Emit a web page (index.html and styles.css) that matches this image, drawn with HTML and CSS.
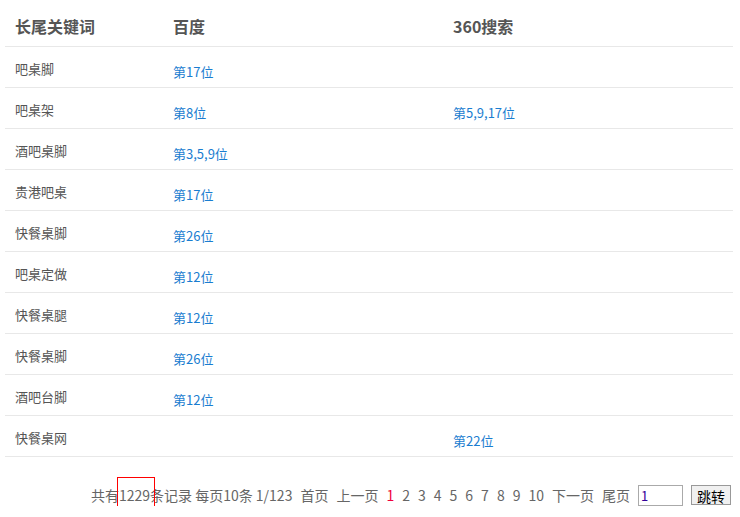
FILE: index.html
```html
<!DOCTYPE html>
<html lang="zh-CN">
<head>
<meta charset="utf-8" />
<title>长尾关键词排名</title>
<link rel="stylesheet" href="styles.css">
</head>
<body>
<div id="content">
<table class="rank">
<thead>
<tr><th class="c1">长尾关键词</th><th class="c2">百度</th><th class="c3">360搜索</th></tr>
</thead>
<tbody>
<tr><td class="kw">吧桌脚</td><td><a href="#">第17位</a></td><td></td></tr>
<tr><td class="kw">吧桌架</td><td><a href="#">第8位</a></td><td><a href="#">第5,9,17位</a></td></tr>
<tr><td class="kw">酒吧桌脚</td><td><a href="#">第3,5,9位</a></td><td></td></tr>
<tr><td class="kw">贵港吧桌</td><td><a href="#">第17位</a></td><td></td></tr>
<tr><td class="kw">快餐桌脚</td><td><a href="#">第26位</a></td><td></td></tr>
<tr><td class="kw">吧桌定做</td><td><a href="#">第12位</a></td><td></td></tr>
<tr><td class="kw">快餐桌腿</td><td><a href="#">第12位</a></td><td></td></tr>
<tr><td class="kw">快餐桌脚</td><td><a href="#">第26位</a></td><td></td></tr>
<tr><td class="kw">酒吧台脚</td><td><a href="#">第12位</a></td><td></td></tr>
<tr><td class="kw">快餐桌网</td><td></td><td><a href="#">第22位</a></td></tr>
</tbody>
</table>

<div class="pager">
<span>共有<span class="mark">1229</span>条记录 每页10条 1/123</span>
<a href="#">首页</a>
<a href="#">上一页</a>
<span class="cur">1</span>
<a href="#">2</a>
<a href="#">3</a>
<a href="#">4</a>
<a href="#">5</a>
<a href="#">6</a>
<a href="#">7</a>
<a href="#">8</a>
<a href="#">9</a>
<a href="#">10</a>
<a href="#">下一页</a>
<a href="#">尾页</a>
<input type="text" class="go" value="1" />
<button class="jump">跳转</button>
</div>
</div>
</body>
</html>
```

FILE: styles.css
```css
body { margin: 0; background: #fff; font-family: "Microsoft YaHei", "Noto Sans CJK SC", "Liberation Sans", sans-serif; color: #555; }
#content { padding: 0 7px 0 5px; }

.rank { width: 728px; border-collapse: collapse; table-layout: fixed; }
.rank th { height: 46px; padding: 6px 10px 0; text-align: left; font-size: 16px; font-weight: bold; color: #555; border-bottom: 1px solid #e8e8e8; vertical-align: middle; box-sizing: border-box; }
.rank th.c1 { width: 158px; }
.rank th.c2 { width: 280px; }
.rank td { height: 41px; padding: 17px 10px 0; font-size: 13px; line-height: 16px; vertical-align: top; border-bottom: 1px solid #e8e8e8; box-sizing: border-box; }
.rank td.kw { padding-top: 14px; color: #555; }
.rank a { color: #1a7dd0; text-decoration: none; }

.pager { display: flex; justify-content: flex-end; align-items: center; gap: 8px; margin-top: 28px; padding-right: 2px; font-size: 14px; color: #666; }
.pager a { color: #666; text-decoration: none; }
.pager .cur { color: #f0003c; }
.pager .mark { position: relative; }
.pager .mark::after { content: ""; position: absolute; left: -2px; right: -5px; top: -8px; bottom: -7px; border: 1px solid #ff0000; }
.pager .go { width: 45px; height: 21px; box-sizing: border-box; border: 1px solid #aaa; padding: 0 2px; font-size: 13px; color: #309; font-family: inherit; }
.pager .jump { width: 40px; height: 20px; box-sizing: border-box; border: 1px solid #999; background: #f0f0f0; padding: 0; font-size: 14px; color: #000; font-family: "SimSun", "Noto Sans CJK SC", sans-serif; }
```
